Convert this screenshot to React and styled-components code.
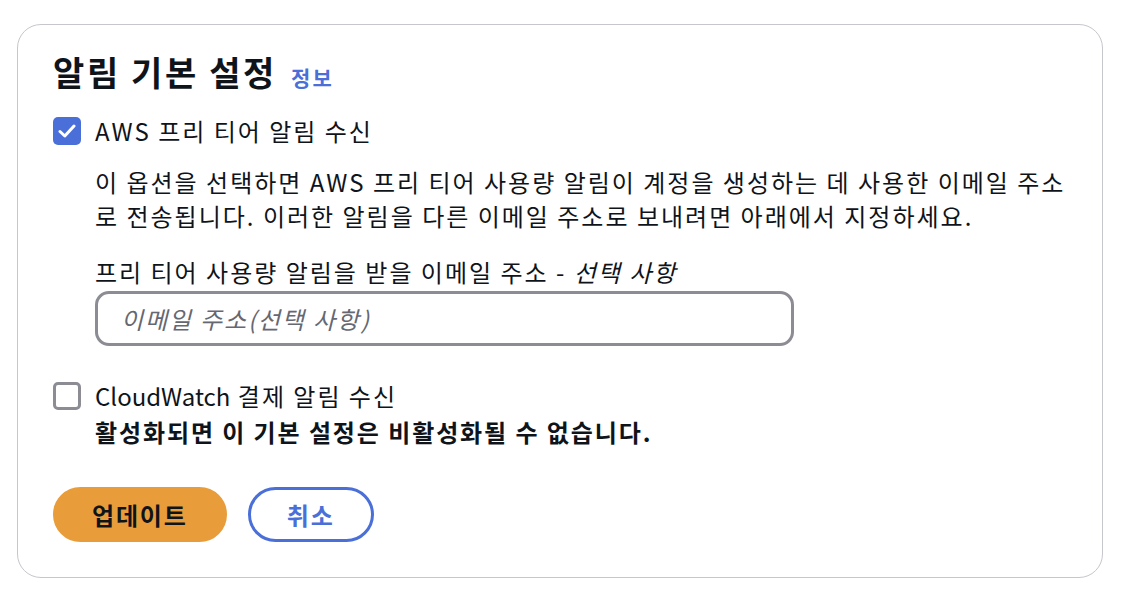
import React from "react";
import styled, { createGlobalStyle } from "styled-components";

const Global = createGlobalStyle`
  html, body { margin: 0; padding: 0; background: #ffffff; }
  body { font-family: "Noto Sans CJK KR", "Noto Sans", sans-serif; color: #0f141a; }
  * { box-sizing: border-box; }
`;

const Page = styled.div`
  padding: 24px 18px 12px 17px;
`;

const Card = styled.section`
  border: 1px solid #c6c6cd;
  border-radius: 24px;
  height: 554px;
  padding: 20px 36px 0 35px;
  display: flex;
  flex-direction: column;
  letter-spacing: 2px;
`;

const TitleRow = styled.div`
  display: flex;
  align-items: baseline;
  gap: 14px;
  height: 54px;
`;

const Title = styled.h2`
  margin: 0;
  font-size: 34px;
  font-weight: 700;
  line-height: 54px;
  letter-spacing: 2.6px;
`;

const InfoLink = styled.a`
  font-size: 21px;
  font-weight: 700;
  letter-spacing: 2.2px;
  color: #4a6fd8;
  text-decoration: none;
`;

const CheckRow = styled.label`
  display: flex;
  align-items: center;
  gap: 14px;
  margin-top: ${(p) => p.$mt}px;
  font-size: 24px;
  line-height: 32px;
`;

const Brand = styled.span`
  letter-spacing: 0;
`;

const Box = styled.span`
  width: 28px;
  height: 28px;
  border-radius: 5px;
  flex: none;
  display: flex;
  align-items: center;
  justify-content: center;
  background: ${(p) => (p.$checked ? "#4a6fd8" : "#ffffff")};
  border: ${(p) => (p.$checked ? "none" : "3px solid #8c8c94")};
`;

const Indented = styled.div`
  padding-left: 42px;
`;

const Desc = styled.p`
  margin: 18px 0 0;
  font-size: 24px;
  line-height: 34px;
`;

const FieldLabel = styled.div`
  margin-top: 22px;
  font-size: 24px;
  line-height: 34px;
  em { font-style: italic; }
`;

const Input = styled.input`
  display: block;
  margin-top: 2px;
  width: 699px;
  height: 55px;
  border: 3px solid #8c8c94;
  border-radius: 14px;
  padding: 0 23px;
  font-family: inherit;
  font-size: 24px;
  letter-spacing: 1.85px;
  font-style: italic;
  color: #0f141a;
  outline: none;
  &::placeholder { color: #656871; font-style: italic; }
`;

const Warning = styled.div`
  font-size: 24px;
  font-weight: 700;
  line-height: 40px;
  letter-spacing: 1.9px;
`;

const Actions = styled.div`
  display: flex;
  gap: 21px;
  margin-top: 35px;
`;

const Button = styled.button`
  height: 55px;
  border-radius: 28px;
  font-family: inherit;
  font-size: 24px;
  font-weight: 700;
  letter-spacing: 1.85px;
  padding: 0 36px;
  background: ${(p) => (p.$primary ? "#e89d3a" : "#ffffff")};
  color: ${(p) => (p.$primary ? "#0f141a" : "#4a6fd8")};
  border: 3px solid ${(p) => (p.$primary ? "#e89d3a" : "#4a6fd8")};
  cursor: pointer;
`;

const Check = () => (
  <svg width="18" height="14" viewBox="0 0 18 14" fill="none">
    <path d="M2 7.5 L6.8 12 L16 2" stroke="#fff" strokeWidth="3" strokeLinecap="round" strokeLinejoin="round" />
  </svg>
);

export default function App() {
  return (
    <>
      <Global />
      <Page>
        <Card>
          <TitleRow>
            <Title>알림 기본 설정</Title>
            <InfoLink href="#">정보</InfoLink>
          </TitleRow>
          <CheckRow $mt={16}>
            <Box $checked><Check /></Box>
            AWS 프리 티어 알림 수신
          </CheckRow>
          <Indented>
            <Desc>
              이 옵션을 선택하면 AWS 프리 티어 사용량 알림이 계정을 생성하는 데 사용한 이메일 주소로 전송됩니다. 이러한 알림을 다른 이메일 주소로 보내려면 아래에서 지정하세요.
            </Desc>
            <FieldLabel>
              프리 티어 사용량 알림을 받을 이메일 주소 - <em>선택 사항</em>
            </FieldLabel>
            <Input placeholder="이메일 주소(선택 사항)" />
          </Indented>
          <CheckRow $mt={34}>
            <Box />
            <span><Brand>CloudWatch</Brand> 결제 알림 수신</span>
          </CheckRow>
          <Indented>
            <Warning>활성화되면 이 기본 설정은 비활성화될 수 없습니다.</Warning>
          </Indented>
          <Actions>
            <Button $primary>업데이트</Button>
            <Button>취소</Button>
          </Actions>
        </Card>
      </Page>
    </>
  );
}
